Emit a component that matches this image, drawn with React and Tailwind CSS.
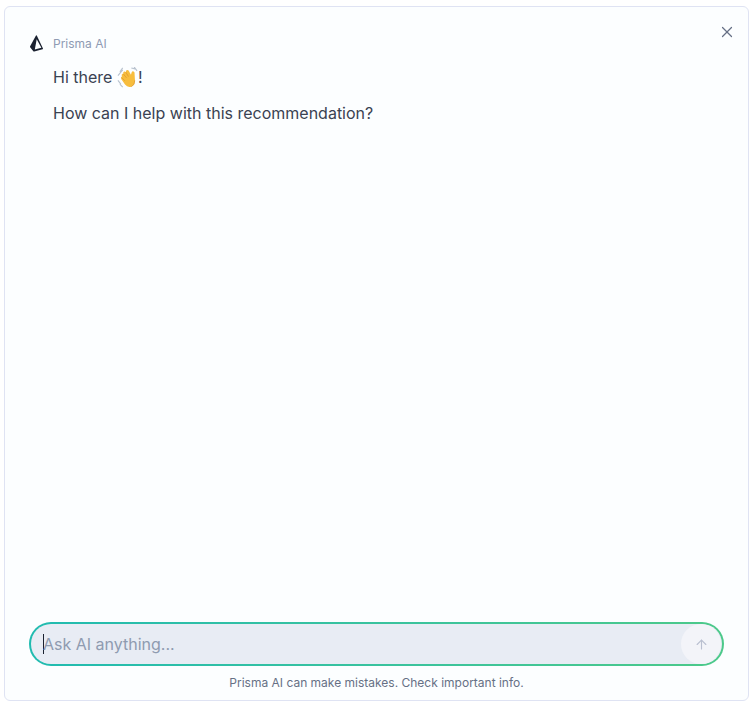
import { ArrowUp, X } from 'lucide-react';

function PrismaLogo() {
  return (
    <svg width="15" height="17" viewBox="0 0 16 17" preserveAspectRatio="none" className="shrink-0">
      <path
        fillRule="evenodd"
        clipRule="evenodd"
        fill="#1a2130"
        d="M8.3 0.6 L14.9 13.4 Q15.1 14 14.5 14.2 L5.6 16.6 Q5 16.7 4.6 16.3 L1.2 12.2 Q0.9 11.7 1.2 11.3 L7.3 0.7 Q7.8 0.1 8.3 0.6 Z M8.2 4.2 L6.2 14.6 L13.2 12.8 Z"
      />
    </svg>
  );
}

function WaveEmoji() {
  return (
    <svg width="21" height="21" viewBox="0 0 22 22" className="shrink-0">
      <path d="M1 9 L6 3 M3 5 L6 1 M15 1 L19 2 M18 0 L21 4" stroke="#b9c3cf" strokeWidth="1.2" fill="none" />
      <path d="M1 14 L4 18 M3 18 L6 21" stroke="#b9c3cf" strokeWidth="1.2" fill="none" />
      <path
        fill="#f7bd3d"
        d="M5 9 Q4.5 7.5 6 7 L6.6 7.2 Q6 5.2 7.6 4.8 Q8.6 4.6 9.2 5.4 Q9.2 3.4 10.8 3.2 Q12 3.2 12.6 4.4 L14.6 8 L15.4 5.4 Q16 4 17.4 4.6 Q18.6 5.2 18.4 6.6 L18.8 14 Q19 19 15 20.6 Q11 21.8 8.4 18.4 L4.4 12.6 Q3.6 11 5 10.6 Z"
      />
      <path
        fill="none"
        stroke="#d9922a"
        strokeWidth="0.7"
        d="M6.6 7.2 L10 11.4 M9.2 5.4 L12 10 M4.6 10.8 L8.2 14.4 M18.6 14 Q18.8 19 15 20.6"
      />
    </svg>
  );
}

export default function App() {
  return (
    <div className="h-[706px] w-full bg-white pt-[6px] pr-[5px] pb-[5px] pl-[4px] font-['Inter',sans-serif]">
      <div className="relative flex h-full w-full flex-col rounded-[6px] border border-[#dfe3f3] bg-[#fcfeff]">
        <button className="absolute top-[16px] right-[12px] text-[#667085]">
          <X size={18} strokeWidth={1.6} />
        </button>

        <div className="flex-1 pt-[28px] pl-[24px]">
          <div className="flex items-center gap-[9px]">
            <PrismaLogo />
            <span className="text-[12px] leading-[16px] text-[#8f9bb3]">Prisma AI</span>
          </div>
          <div className="mt-[13px] pl-[24px] text-[16px] leading-[24px] text-[#3a4252]">
            <p className="flex items-center">
              Hi there&nbsp;
              <WaveEmoji />!
            </p>
            <p className="mt-[12px]">How can I help with this recommendation?</p>
          </div>
        </div>

        <div className="px-[24px] pb-[9px]">
          <div className="h-[44px] rounded-full bg-gradient-to-r from-[#20bbb0] to-[#4cc98a] p-[2px]">
            <div className="flex h-full items-center rounded-full bg-[#e8ecf4] pr-[1px] pl-[12px]">
              <div className="-mr-px h-[20px] w-px shrink-0 bg-[#1a2130]" />
              <input
                readOnly
                placeholder="Ask AI anything..."
                className="min-w-0 flex-1 bg-transparent text-[16px] text-[#2f3747] outline-none placeholder:text-[#8f9bb0]"
              />
              <button className="flex h-[40px] w-[40px] shrink-0 items-center justify-center rounded-full bg-[#f3f4f9] text-[#b9bfd0]">
                <ArrowUp size={15} strokeWidth={1.8} />
              </button>
            </div>
          </div>
          <p className="mt-[9px] text-center text-[12px] leading-[16px] text-[#667085]">
            Prisma AI can make mistakes. Check important info.
          </p>
        </div>
      </div>
    </div>
  );
}
